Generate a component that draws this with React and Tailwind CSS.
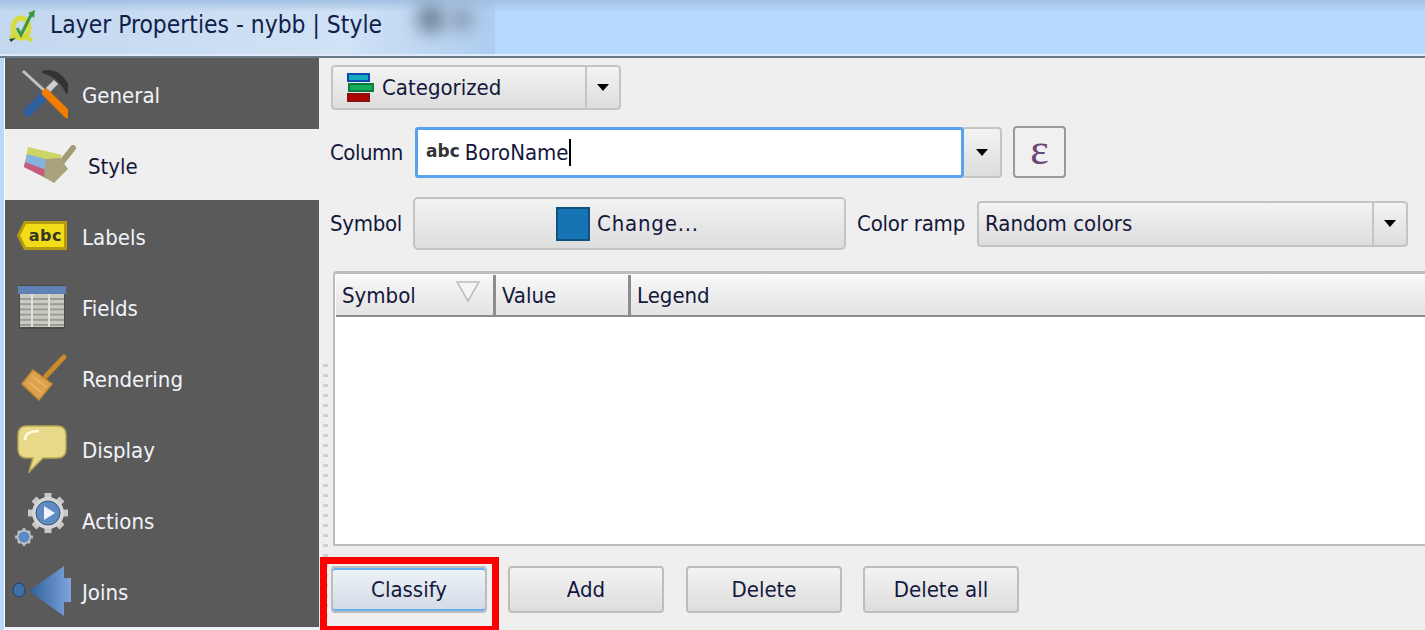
const navItems = [
  { label: 'General', icon: <ToolsIcon />, },
  { label: 'Style', icon: <StyleIcon />, active: true },
  { label: 'Labels', icon: <LabelIcon /> },
  { label: 'Fields', icon: <TableIcon /> },
  { label: 'Rendering', icon: <BroomIcon /> },
  { label: 'Display', icon: <BubbleIcon /> },
  { label: 'Actions', icon: <GearIcon /> },
  { label: 'Joins', icon: <JoinIcon /> },
];

function QgisIcon() {
  return (
    <svg className="relative" width="27" height="33" viewBox="0 0 27 33">
      <ellipse cx="12" cy="19" rx="8" ry="10" fill="none" stroke="#d6dc3c" strokeWidth="5" />
      <path d="M1 28l7-2M16 26l7 6" stroke="#d2d838" strokeWidth="4" />
      <path d="M8 19l4 7L23 4" fill="none" stroke="#3f9a3a" strokeWidth="3" />
      <path d="M19 4l7-3-1 8z" fill="#3f9a3a" />
      <path d="M0 30l7-1-5 4z" fill="#2b4a24" />
    </svg>
  );
}

function ToolsIcon() {
  return (
    <svg width="52" height="52" viewBox="-6 0 52 52">
      <path d="M1 3L25 25" stroke="#c2c2c2" strokeWidth="3" />
      <path d="M20 3C30 0 42 4 49 22L44 26C40 16 32 8 20 5z" fill="#333" />
      <path d="M34 14L26 22" stroke="#cfcfcf" strokeWidth="6" />
      <path d="M23 27L6 44" stroke="#2f5f9f" strokeWidth="9" strokeLinecap="round" />
      <path d="M24 25L45 46" stroke="#f07c00" strokeWidth="8" strokeLinecap="round" />
    </svg>
  );
}

function StyleIcon() {
  return (
    <svg width="52" height="40" viewBox="0 0 52 40">
      <path d="M4 2L38 10 30 37 0 22z" fill="#cdd464" />
      <path d="M3 9L36 18 30 37 0 22z" fill="#85b3dd" />
      <path d="M1 17L30 28 30 37 0 22z" fill="#c85a7d" />
      <path d="M38 17L49 3" stroke="#a39c73" strokeWidth="6" strokeLinecap="round" />
      <path d="M22 14L36 13 44 24 30 38 20 32z" fill="#a9a27c" />
    </svg>
  );
}

function LabelIcon() {
  return (
    <div className="relative flex h-[29px] w-[50px] items-center justify-end">
      <svg className="absolute left-0 top-0" width="50" height="29" viewBox="0 0 50 29">
        <path d="M8 1.5H48.5V27.5H8L1.5 14.5z" fill="#f2dc18" stroke="#b59a10" strokeWidth="3" />
      </svg>
      <span className="relative pr-[5px] font-['DejaVu_Sans'] text-[16px] font-bold leading-none tracking-[0.5px] text-[#35352a]">abc</span>
    </div>
  );
}

function TableIcon() {
  const rows = [0, 1, 2, 3, 4, 5];
  return (
    <svg width="50" height="44" viewBox="0 0 50 44">
      <rect x="2" y="0" width="46" height="44" fill="#4a4a4a" />
      <rect x="1" y="1" width="48" height="8" fill="#5f82b5" />
      <rect x="3" y="9" width="44" height="33" fill="#c9cbc2" />
      {rows.map((r) => (
        <rect key={r} x="3" y={13 + r * 5.2} width="44" height="2" fill="#9b9d95" />
      ))}
      <path d="M15 9V42M32 9V42" stroke="#e0e1da" strokeWidth="2" />
    </svg>
  );
}

function BroomIcon() {
  return (
    <svg width="50" height="48" viewBox="-4 0 50 48">
      <path d="M25 22L43 3" stroke="#c98a2c" strokeWidth="5" strokeLinecap="round" />
      <path d="M12 16L31 30 18 46 1 30z" fill="#dda24c" stroke="#c58a35" strokeWidth="1.5" />
      <path d="M8 28L20 38M12 23L25 33" stroke="#eab86c" strokeWidth="1.5" />
    </svg>
  );
}

function BubbleIcon() {
  return (
    <svg width="50" height="48" viewBox="0 0 50 48">
      <path d="M10 1H40Q49 1 49 10V24Q49 33 40 33H26L12 47 16 33H10Q1 33 1 24V10Q1 1 10 1z" fill="#e8da8a" stroke="#b7a850" strokeWidth="1.5" />
      <path d="M8 15Q8 6 22 6" fill="none" stroke="#fffbe6" strokeWidth="2.5" />
    </svg>
  );
}

function GearIcon() {
  return (
    <svg width="54" height="56" viewBox="0 0 54 56">
      <g stroke="#c8c8c8" strokeWidth="7">
        <path d="M33 1V41M13 21H53M19 7L47 35M47 7L19 35" />
      </g>
      <circle cx="33" cy="21" r="16" fill="#d5d5d5" />
      <circle cx="33" cy="21" r="12" fill="#5f8bc4" stroke="#38587f" strokeWidth="1" />
      <path d="M29 14L40 21 29 28z" fill="#eef3fa" />
      <g stroke="#b5b5b5" strokeWidth="3">
        <path d="M9 36V54M0 45H18M3 39L15 51M15 39L3 51" />
      </g>
      <circle cx="9" cy="45" r="6.5" fill="#5f8bc4" stroke="#c8c8c8" strokeWidth="1.5" />
    </svg>
  );
}

function JoinIcon() {
  return (
    <svg width="60" height="52" viewBox="0 0 60 52">
      <defs>
        <linearGradient id="joinArrow" x1="0" y1="0" x2="1" y2="0">
          <stop offset="0" stopColor="#2f5f9a" />
          <stop offset="1" stopColor="#7fa4de" />
        </linearGradient>
      </defs>
      <ellipse cx="7" cy="25" rx="6" ry="7" fill="#3d6fa8" stroke="#23405f" strokeWidth="1" />
      <path d="M17 26L52 1V13H59V37H52V51z" fill="url(#joinArrow)" />
    </svg>
  );
}

function Caret() {
  return <span className="h-0 w-0 border-x-[6px] border-t-[7px] border-x-transparent border-t-black" />;
}

function Button({ children, className = '' }) {
  return (
    <button className={`flex h-[47px] w-[156px] items-center justify-center rounded-[4px] border-2 border-[#bdbdbd] bg-gradient-to-b from-[#f3f3f3] to-[#dddddd] ${className}`}>
      {children}
    </button>
  );
}

export default function App() {
  return (
    <div className="flex h-[630px] w-[1425px] flex-col overflow-hidden bg-[#efefef] font-['DejaVu_Sans_Condensed','DejaVu_Sans',sans-serif] text-[22px] text-[#14183c]">
      {/* title bar */}
      <div className="relative flex h-[58px] shrink-0 items-center gap-[14px] overflow-hidden border-b-2 border-[#677b8b] bg-[#b5d9ff] pb-[6px] pl-[9px] shadow-[inset_0_-2px_0_#dfeafa]">
        <div className="absolute bottom-[2px] left-0 top-0 w-[495px] bg-gradient-to-r from-[#c3d8ef] via-[#d0e2f5] via-70% to-[#aecdf0]" />
        <div className="absolute inset-x-0 top-0 h-[12px] bg-gradient-to-b from-[#a3c0e3] to-transparent" />
        <div className="absolute left-[416px] top-[4px] h-[30px] w-[30px] rounded-full bg-[#75899f] blur-[8px]" />
        <div className="absolute left-[448px] top-[6px] h-[26px] w-[28px] rounded-full bg-[#8fa4bd] blur-[8px]" />
        <QgisIcon />
        <span className="relative text-[24.4px] text-[#10204a]">Layer Properties - nybb | Style</span>
      </div>

      <div className="flex min-h-0 flex-1">
        <div className="w-[5px] shrink-0 border-r border-white bg-[#b9d9fb]" />

        {/* sidebar */}
        <nav className="flex w-[314px] shrink-0 flex-col border-b-[3px] border-[#eef2f7] bg-[#5a5a5a] text-[#f1f4fa]">
          {navItems.map((item) => (
            <div
              key={item.label}
              className={`flex h-[71px] shrink-0 items-center ${item.active ? 'bg-[#efefef] text-[#14183c]' : ''}`}
            >
              <span className={`flex items-center justify-center ${item.active ? 'ml-[15px] mr-[8px] w-[60px]' : 'ml-[5px] mr-[8px] w-[64px]'}`}>
                {item.icon}
              </span>
              <span className="pt-[4px]">{item.label}</span>
            </div>
          ))}
        </nav>

        {/* splitter */}
        <div className="flex w-[12px] shrink-0 flex-col items-center gap-[7px] pt-[306px]">
          {Array.from({ length: 26 }, (_, i) => (
            <span key={i} className="h-[3px] w-[5px] shrink-0 bg-[#d0d0d0]" />
          ))}
        </div>

        {/* style panel */}
        <main className="flex min-w-0 flex-1 flex-col pt-[7px]">
          <div className="flex h-[45px] w-[290px] items-center rounded-[4px] border-2 border-[#c4c4c4] bg-gradient-to-b from-[#f3f3f3] to-[#dddddd]">
            <div className="flex flex-1 items-center gap-[8px] pl-[14px]">
              <div className="flex flex-col gap-[1px]">
                <span className="h-[9px] w-[23px] border-2 border-[#0b49b0] bg-[#12a9bd]" />
                <span className="ml-[1px] h-[9px] w-[26px] border-2 border-[#0b7a3c] bg-[#11ad59]" />
                <span className="h-[9px] w-[23px] border-2 border-[#8c0f0f] bg-[#b00000]" />
              </div>
              <span>Categorized</span>
            </div>
            <div className="flex h-full w-[34px] items-center justify-center border-l-2 border-[#c4c4c4]">
              <Caret />
            </div>
          </div>

          <div className="mt-[16px] flex h-[52px] items-center">
            <span className="ml-[-1px] w-[85px] tracking-[-0.5px]">Column</span>
            <div className="flex h-[51px] w-[549px] items-center rounded-[3px] border-[3px] border-[#58a2ee] bg-white pl-[8px]">
              <span className="font-['DejaVu_Sans'] text-[17px] font-bold text-[#333]">abc</span>
              <span className="ml-[5px]">BoroName</span>
              <span className="h-[27px] w-[2px] bg-black" />
            </div>
            <div className="flex h-[51px] w-[38px] items-center justify-center rounded-r-[4px] border-2 border-l-0 border-[#c4c4c4] bg-gradient-to-b from-[#f3f3f3] to-[#dddddd]">
              <Caret />
            </div>
            <button className="ml-[11px] flex h-[52px] w-[53px] items-center justify-center rounded-[4px] border-2 border-[#9a9a9a] bg-[#f0f0f0] pb-[4px] font-['Liberation_Serif',serif] text-[44px] leading-none text-[#6b4478]">
              ε
            </button>
          </div>

          <div className="mt-[19px] flex h-[53px] items-center">
            <span className="ml-[-1px] w-[83px] tracking-[-0.3px]">Symbol</span>
            <button className="flex h-[53px] w-[433px] items-center justify-center gap-[7px] rounded-[5px] border-2 border-[#c4c4c4] bg-gradient-to-b from-[#f3f3f3] to-[#dddddd] pr-[4px]">
              <span className="h-[34px] w-[34px] border-2 border-[#10507f] bg-[#1673b4]" />
              <span className="tracking-[0.8px]">Change...</span>
            </button>
            <span className="ml-[11px] w-[120px] tracking-[-0.2px]">Color ramp</span>
            <div className="flex h-[46px] w-[431px] items-center rounded-[4px] border-2 border-[#c4c4c4] bg-gradient-to-b from-[#f3f3f3] to-[#dddddd]">
              <span className="flex-1 pl-[6px]">Random colors</span>
              <div className="flex h-full w-[34px] items-center justify-center border-l-2 border-[#c4c4c4]">
                <Caret />
              </div>
            </div>
          </div>

          {/* categories table */}
          <div className="ml-[2px] mt-[21px] flex h-[275px] flex-col rounded-tl-[4px] border-b-2 border-l-2 border-t-[3px] border-[#bdbdbd] bg-white pl-px pt-[1px]">
            <div className="flex h-[42px] shrink-0 border-b-2 border-[#8d8d8d] bg-gradient-to-b from-[#f8f8f8] to-[#e3e3e3]">
              <div className="relative flex w-[160px] items-center border-r-[3px] border-[#8d8d8d] pl-[6px]">
                Symbol
                <svg className="absolute right-[13px] top-[6px]" width="24" height="22" viewBox="0 0 24 22">
                  <path d="M1 1H23L12 20z" fill="#f4f4f4" stroke="#bcbcbc" strokeWidth="1.5" />
                </svg>
              </div>
              <div className="flex w-[135px] items-center border-r-[3px] border-[#8d8d8d] pl-[6px]">Value</div>
              <div className="flex flex-1 items-center pl-[6px]">Legend</div>
            </div>
          </div>

          {/* bottom buttons */}
          <div className="relative mt-[20px] flex gap-[21px]">
            <Button className="border-[#b9c4cf] !from-[#eef3f9] !to-[#d3dae4] shadow-[inset_0_2px_0_#68aef2,inset_0_-2px_0_#68aef2]">Classify</Button>
            <Button>Add</Button>
            <Button className="ml-[1px]">Delete</Button>
            <Button className="w-[155px]">Delete all</Button>
            <div className="absolute left-[-11px] top-[-9px] h-[74px] w-[179px] border-[7px] border-b-[5px] border-[#ff0000]" />
          </div>
        </main>
      </div>
    </div>
  );
}
